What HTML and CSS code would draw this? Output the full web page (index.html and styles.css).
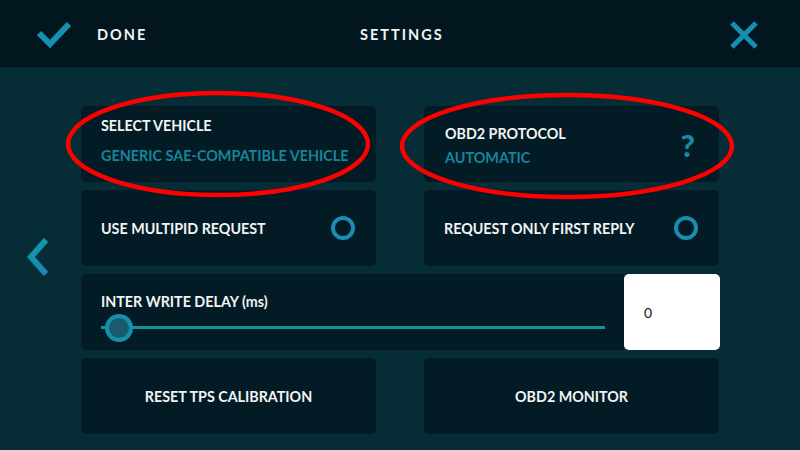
FILE: index.html
```html
<!DOCTYPE html>
<html>
<head>
<meta charset="utf-8">
<link rel="stylesheet" href="styles.css">
</head>
<body>
<div class="app">
  <header class="topbar">
    <div class="done">
      <svg class="check" width="40" height="30" viewBox="0 0 40 30"><polyline points="2,13 13,24 32,4" fill="none" stroke="#1590b0" stroke-width="6"/></svg>
      <span class="done-label">DONE</span>
    </div>
    <div class="title">SETTINGS</div>
    <svg class="close" width="30" height="30" viewBox="0 0 30 30"><path d="M3 3 L27 27 M27 3 L3 27" stroke="#1590b0" stroke-width="5"/></svg>
  </header>
  <main class="content">
    <div class="side">
      <svg width="26" height="42" viewBox="0 0 26 42">
        <defs><linearGradient id="cg" x1="0" y1="0" x2="0" y2="1"><stop offset="0" stop-color="#0f9aa6"/><stop offset="1" stop-color="#1b86b4"/></linearGradient></defs>
        <polyline points="20,3 5,20 20,37" fill="none" stroke="url(#cg)" stroke-width="6"/>
      </svg>
    </div>
    <div class="grid">
      <div class="card card-vehicle">
        <div class="label">SELECT VEHICLE</div>
        <div class="value">GENERIC SAE-COMPATIBLE VEHICLE</div>
      </div>
      <div class="card card-protocol">
        <div class="texts">
          <div class="label">OBD2 PROTOCOL</div>
          <div class="value">AUTOMATIC</div>
        </div>
        <span class="help">?</span>
      </div>
      <div class="card card-row">
        <div class="label">USE MULTIPID REQUEST</div>
        <span class="radio"></span>
      </div>
      <div class="card card-row">
        <div class="label">REQUEST ONLY FIRST REPLY</div>
        <span class="radio"></span>
      </div>
      <div class="slider-row">
        <div class="slider-card">
          <div class="label">INTER WRITE DELAY <span class="unit">(ms)</span></div>
          <div class="track"><span class="thumb"></span></div>
        </div>
        <div class="input-box">0</div>
      </div>
      <div class="card card-button">RESET TPS CALIBRATION</div>
      <div class="card card-button">OBD2 MONITOR</div>
    </div>
  </main>
  <svg class="marks" width="800" height="450" viewBox="0 0 800 450">
    <ellipse cx="218" cy="144" rx="150" ry="51" fill="none" stroke="#ff0000" stroke-width="4.5"/>
    <ellipse cx="567" cy="146" rx="165" ry="51" fill="none" stroke="#ff0000" stroke-width="4.5"/>
  </svg>
</div>
</body>
</html>
```
FILE: styles.css
```css
* { box-sizing: border-box; }
html, body { margin: 0; padding: 0; }
body {
  width: 800px;
  height: 450px;
  overflow: hidden;
  background: #062d36;
  font-family: Lato, "Open Sans", sans-serif;
  color: #f2f4f5;
}
.app { position: relative; width: 800px; height: 450px; }
.topbar {
  height: 67px;
  background: #021620;
  display: flex;
  align-items: center;
  position: relative;
}
.done { display: flex; align-items: center; padding-left: 37px; }
.check { display: block; margin-top: 2px; }
.done-label {
  margin-left: 20px;
  font-size: 14.5px;
  font-weight: 700;
  letter-spacing: 2px;
  margin-top: 1px;
}
.title {
  position: absolute;
  left: 360px;
  top: 26px;
  font-size: 14.5px;
  font-weight: 700;
  letter-spacing: 2px;
}
.close { margin-left: auto; margin-right: 41px; display: block; margin-top: 2px; }

.content { display: flex; padding-top: 39px; }
.side {
  width: 81px;
  padding-top: 131px;
  padding-left: 26px;
}
.side svg { display: block; }
.grid {
  display: grid;
  grid-template-columns: 295px 295px;
  grid-auto-rows: 76px;
  column-gap: 48px;
  row-gap: 8px;
}
.card {
  background: #031b24;
  border-radius: 5px;
}
.label { font-size: 14.3px; font-weight: 700; color: #f2f4f5; }
.value { font-size: 14.4px; font-weight: 700; color: #15859c; }
.card-vehicle { padding: 11px 20px 0; }
.card-vehicle .value { margin-top: 13px; }
.card-protocol { display: flex; align-items: center; padding: 0 20px 0 21px; }
.card-protocol .texts { flex: 1; padding-top: 3px; }
.card-protocol .value { margin-top: 7px; }
.help {
  font-size: 31px;
  font-weight: 900;
  color: #1589a8;
  margin-right: 4px;
  margin-top: 2px;
}
.card-row {
  display: flex;
  align-items: center;
  justify-content: space-between;
  padding: 0 21px 0 20px;
}
.radio {
  width: 24px;
  height: 24px;
  border-radius: 50%;
  border: 4px solid #1a8eb0;
}
.slider-row {
  grid-column: 1 / 3;
  display: flex;
  width: 639px;
}
.slider-card {
  flex: 1;
  background: #031b24;
  border-radius: 5px 0 0 5px;
  padding: 19px 0 0 20px;
}
.track {
  position: relative;
  margin-top: 16px;
  width: 504px;
  height: 3px;
  background: #0d95a2;
}
.thumb {
  position: absolute;
  left: 4px;
  top: -12px;
  width: 28px;
  height: 28px;
  border-radius: 50%;
  background: #1b5a6e;
  border: 4px solid #1590ad;
}
.input-box {
  width: 96px;
  background: #ffffff;
  border-radius: 5px;
  color: #0a1a22;
  font-size: 14px;
  font-weight: 400;
  padding-left: 20px;
  display: flex;
  align-items: center;
}
.card-button {
  display: flex;
  align-items: center;
  justify-content: center;
  font-size: 14.3px;
  font-weight: 700;
  color: #f2f4f5;
}
.marks { position: absolute; left: 0; top: 0; pointer-events: none; }
```
